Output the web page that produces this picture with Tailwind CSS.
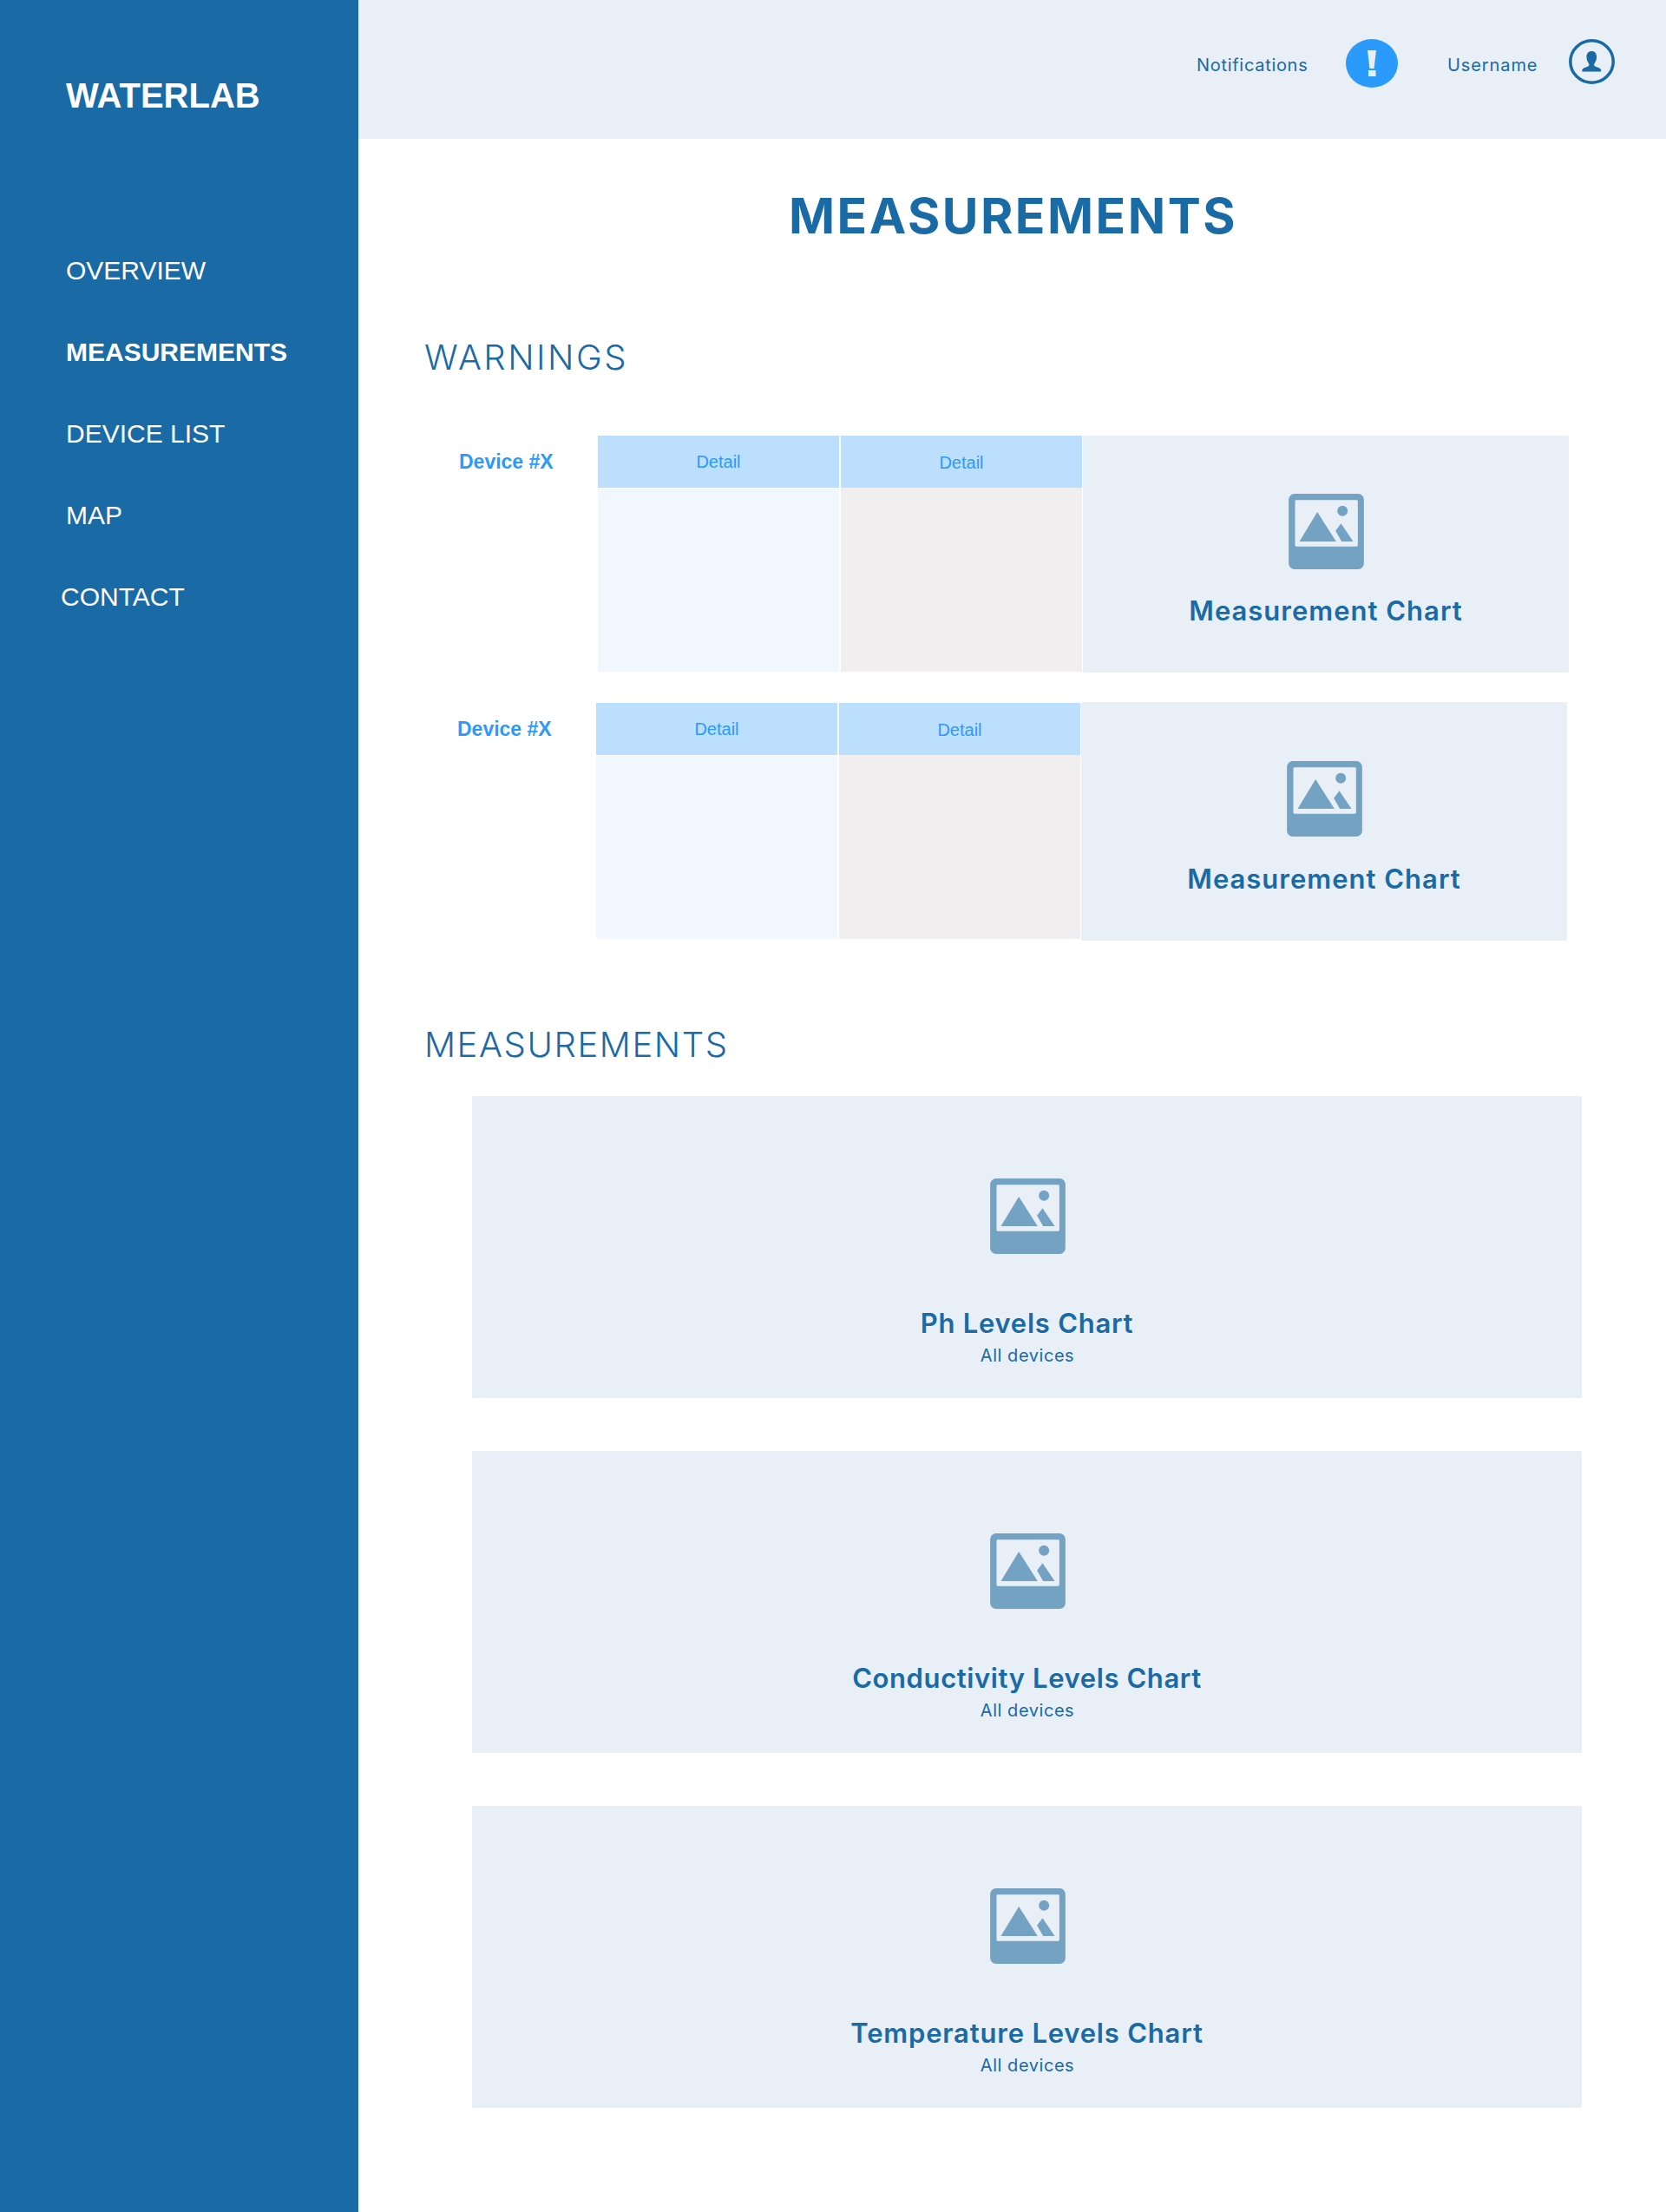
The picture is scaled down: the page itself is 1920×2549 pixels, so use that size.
<!doctype html>
<html lang="en">
  <head>
    <meta charset="UTF-8" />
    <title>Measurements | Waterlab</title>
    <script src="https://cdn.jsdelivr.net/npm/@tailwindcss/browser@4"></script>
  </head>

  <body class="bg-white font-['Inter',sans-serif] text-[#196aa5]">
    <div class="flex w-[1920px] h-[2549px] overflow-hidden">
      <!-- SIDEBAR -->
      <aside class="w-[413px] shrink-0 bg-[#196aa5] text-white font-['Liberation_Sans',sans-serif]">
        <div class="pl-[76px] pt-[86px] text-[40px] leading-[48px] font-bold">WATERLAB</div>
        <nav class="mt-[158px] flex flex-col text-[30px] leading-[40px] gap-[54px]">
          <a class="pl-[76px]">OVERVIEW</a>
          <a class="pl-[76px] font-bold">MEASUREMENTS</a>
          <a class="pl-[76px]">DEVICE LIST</a>
          <a class="pl-[76px]">MAP</a>
          <a class="pl-[70px]">CONTACT</a>
        </nav>
      </aside>

      <main class="flex-1">
        <!-- TOP BAR -->
        <header class="h-[160px] bg-[#e8eff7]">
          <div class="flex items-start pl-[966px] pt-[45px]">
            <span class="w-[172px] pt-[15px] text-[20px] leading-[30px] tracking-[0.7px]">Notifications</span>
            <svg class="w-[60px] h-[56px]" viewBox="0 0 60 56">
              <ellipse cx="30" cy="28" rx="30" ry="28" fill="#2a9afb" />
              <polygon points="25,13 35,13 32.5,34 27.5,34" fill="#e8eff7" />
              <rect x="26" y="36" width="8.5" height="7" fill="#e8eff7" />
            </svg>
            <span class="ml-[57px] w-[140px] pt-[15px] text-[20px] leading-[30px] tracking-[0.9px]">Username</span>
            <svg class="w-[53px] h-[52px]" viewBox="0 0 53 52">
              <ellipse cx="26.5" cy="26" rx="24.7" ry="24.2" fill="none" stroke="#196aa5" stroke-width="3.5" />
              <path d="M26.500 14c3.400 0 5.600 2.600 5.600 6.600 0 3.600-1.500 6.200-2.900 8.200l.2 2.300c2.500 1.200 7.600 2.200 7.900 5.100.1.800-.4 1.300-1.200 1.300H16.400c-.8 0-1.300-.5-1.200-1.300.3-2.900 5.400-3.900 7.900-5.100l.2-2.300c-1.400-2-2.900-4.600-2.900-8.200 0-4 2.200-6.600 6.100-6.600z" fill="#196aa5" />
            </svg>
          </div>
        </header>

        <h1 class="h-[178px] flex items-center justify-center pl-[2px] text-[57px] leading-[70px] font-bold tracking-[2.5px]">MEASUREMENTS</h1>

        <h2 class="h-[148px] flex items-center pl-[76px] text-[40px] leading-[50px] font-light tracking-[2.5px]">WARNINGS</h2>

        <!-- WARNING ROWS -->
        <section class="mt-[16px] flex flex-col gap-[34px]">
          <div class="flex ml-[116px]">
            <div class="w-[160px] pt-[17px] font-['Liberation_Sans',sans-serif] text-[23px] leading-[26px] font-bold text-[#2a9afb]">Device #X</div>
            <div class="w-[278px] h-[272px] flex flex-col gap-px">
              <div class="h-[60px] pt-[17px] text-center font-['Liberation_Sans',sans-serif] text-[20px] leading-[26px] text-[#2a9afb] bg-[#bcdffd]">Detail</div>
              <div class="flex-1 bg-[#f0f7fe]"></div>
            </div>
            <div class="ml-[2px] w-[278px] h-[272px] flex flex-col">
              <div class="h-[60px] pt-[18px] text-center font-['Liberation_Sans',sans-serif] text-[20px] leading-[26px] text-[#2a9afb] bg-[#bcdffd]">Detail</div>
              <div class="flex-1 bg-[#f0eeef]"></div>
            </div>
            <div class="ml-px w-[560px] h-[273px] rounded-[2px] bg-[#e8eff7] flex flex-col items-center pt-[67px]">
              <svg class="w-[87px] h-[87px]" viewBox="0 0 260 261">
                <rect width="260" height="261" rx="20" fill="#74a2c3" />
                <rect x="22" y="22" width="217" height="160" rx="4" fill="#e8eff7" />
                <path d="M99 63 164 165H37z" fill="#74a2c3" />
                <path d="M181 103 223 165H183L162 128z" fill="#74a2c3" />
                <circle cx="186" cy="59" r="18" fill="#74a2c3" />
              </svg>
              <div class="mt-[28px] text-[31px] leading-[40px] font-semibold tracking-[1px]">Measurement Chart</div>
            </div>
          </div>

          <div class="flex ml-[114px]">
            <div class="w-[160px] pt-[18px] font-['Liberation_Sans',sans-serif] text-[23px] leading-[26px] font-bold text-[#2a9afb]">Device #X</div>
            <div class="w-[278px] h-[272px] mt-px flex flex-col gap-px">
              <div class="h-[60px] pt-[17px] text-center font-['Liberation_Sans',sans-serif] text-[20px] leading-[26px] text-[#2a9afb] bg-[#bcdffd]">Detail</div>
              <div class="flex-1 bg-[#f0f7fe]"></div>
            </div>
            <div class="ml-[2px] w-[278px] h-[272px] mt-px flex flex-col">
              <div class="h-[60px] pt-[18px] text-center font-['Liberation_Sans',sans-serif] text-[20px] leading-[26px] text-[#2a9afb] bg-[#bcdffd]">Detail</div>
              <div class="flex-1 bg-[#f0eeef]"></div>
            </div>
            <div class="ml-px w-[560px] h-[275px] rounded-[2px] bg-[#e8eff7] flex flex-col items-center pt-[68px]">
              <svg class="w-[87px] h-[87px]" viewBox="0 0 260 261">
                <rect width="260" height="261" rx="20" fill="#74a2c3" />
                <rect x="22" y="22" width="217" height="160" rx="4" fill="#e8eff7" />
                <path d="M99 63 164 165H37z" fill="#74a2c3" />
                <path d="M181 103 223 165H183L162 128z" fill="#74a2c3" />
                <circle cx="186" cy="59" r="18" fill="#74a2c3" />
              </svg>
              <div class="mt-[29px] text-[31px] leading-[40px] font-semibold tracking-[1px]">Measurement Chart</div>
            </div>
          </div>
        </section>

        <h2 class="mt-[90px] h-[60px] flex items-center pl-[76px] text-[40px] leading-[50px] font-light tracking-[1.6px]">MEASUREMENTS</h2>

        <!-- CHARTS -->
        <section class="mt-[29px] ml-[131px] w-[1279px] flex flex-col gap-[61px]">
          <div class="h-[348px] rounded-[2px] bg-[#e8eff7] flex flex-col items-center pt-[95px]">
            <svg class="w-[87px] h-[87px] ml-[1px]" viewBox="0 0 260 261">
              <rect width="260" height="261" rx="20" fill="#74a2c3" />
              <rect x="22" y="22" width="217" height="160" rx="4" fill="#e8eff7" />
              <path d="M99 63 164 165H37z" fill="#74a2c3" />
              <path d="M181 103 223 165H183L162 128z" fill="#74a2c3" />
              <circle cx="186" cy="59" r="18" fill="#74a2c3" />
            </svg>
            <div class="mt-[60px] text-[31px] leading-[40px] font-semibold tracking-[0.75px]">Ph Levels Chart</div>
            <div class="mt-[5px] ml-[1px] text-[20px] leading-[24px] tracking-[0.55px]">All devices</div>
          </div>
          <div class="h-[348px] rounded-[2px] bg-[#e8eff7] flex flex-col items-center pt-[95px]">
            <svg class="w-[87px] h-[87px] ml-[1px]" viewBox="0 0 260 261">
              <rect width="260" height="261" rx="20" fill="#74a2c3" />
              <rect x="22" y="22" width="217" height="160" rx="4" fill="#e8eff7" />
              <path d="M99 63 164 165H37z" fill="#74a2c3" />
              <path d="M181 103 223 165H183L162 128z" fill="#74a2c3" />
              <circle cx="186" cy="59" r="18" fill="#74a2c3" />
            </svg>
            <div class="mt-[60px] text-[31px] leading-[40px] font-semibold tracking-[0.6px]">Conductivity Levels Chart</div>
            <div class="mt-[5px] ml-[1px] text-[20px] leading-[24px] tracking-[0.55px]">All devices</div>
          </div>
          <div class="h-[348px] rounded-[2px] bg-[#e8eff7] flex flex-col items-center pt-[95px]">
            <svg class="w-[87px] h-[87px] ml-[1px]" viewBox="0 0 260 261">
              <rect width="260" height="261" rx="20" fill="#74a2c3" />
              <rect x="22" y="22" width="217" height="160" rx="4" fill="#e8eff7" />
              <path d="M99 63 164 165H37z" fill="#74a2c3" />
              <path d="M181 103 223 165H183L162 128z" fill="#74a2c3" />
              <circle cx="186" cy="59" r="18" fill="#74a2c3" />
            </svg>
            <div class="mt-[60px] text-[31px] leading-[40px] font-semibold tracking-[0.8px]">Temperature Levels Chart</div>
            <div class="mt-[5px] ml-[1px] text-[20px] leading-[24px] tracking-[0.55px]">All devices</div>
          </div>
        </section>
      </main>
    </div>
  </body>
</html>
